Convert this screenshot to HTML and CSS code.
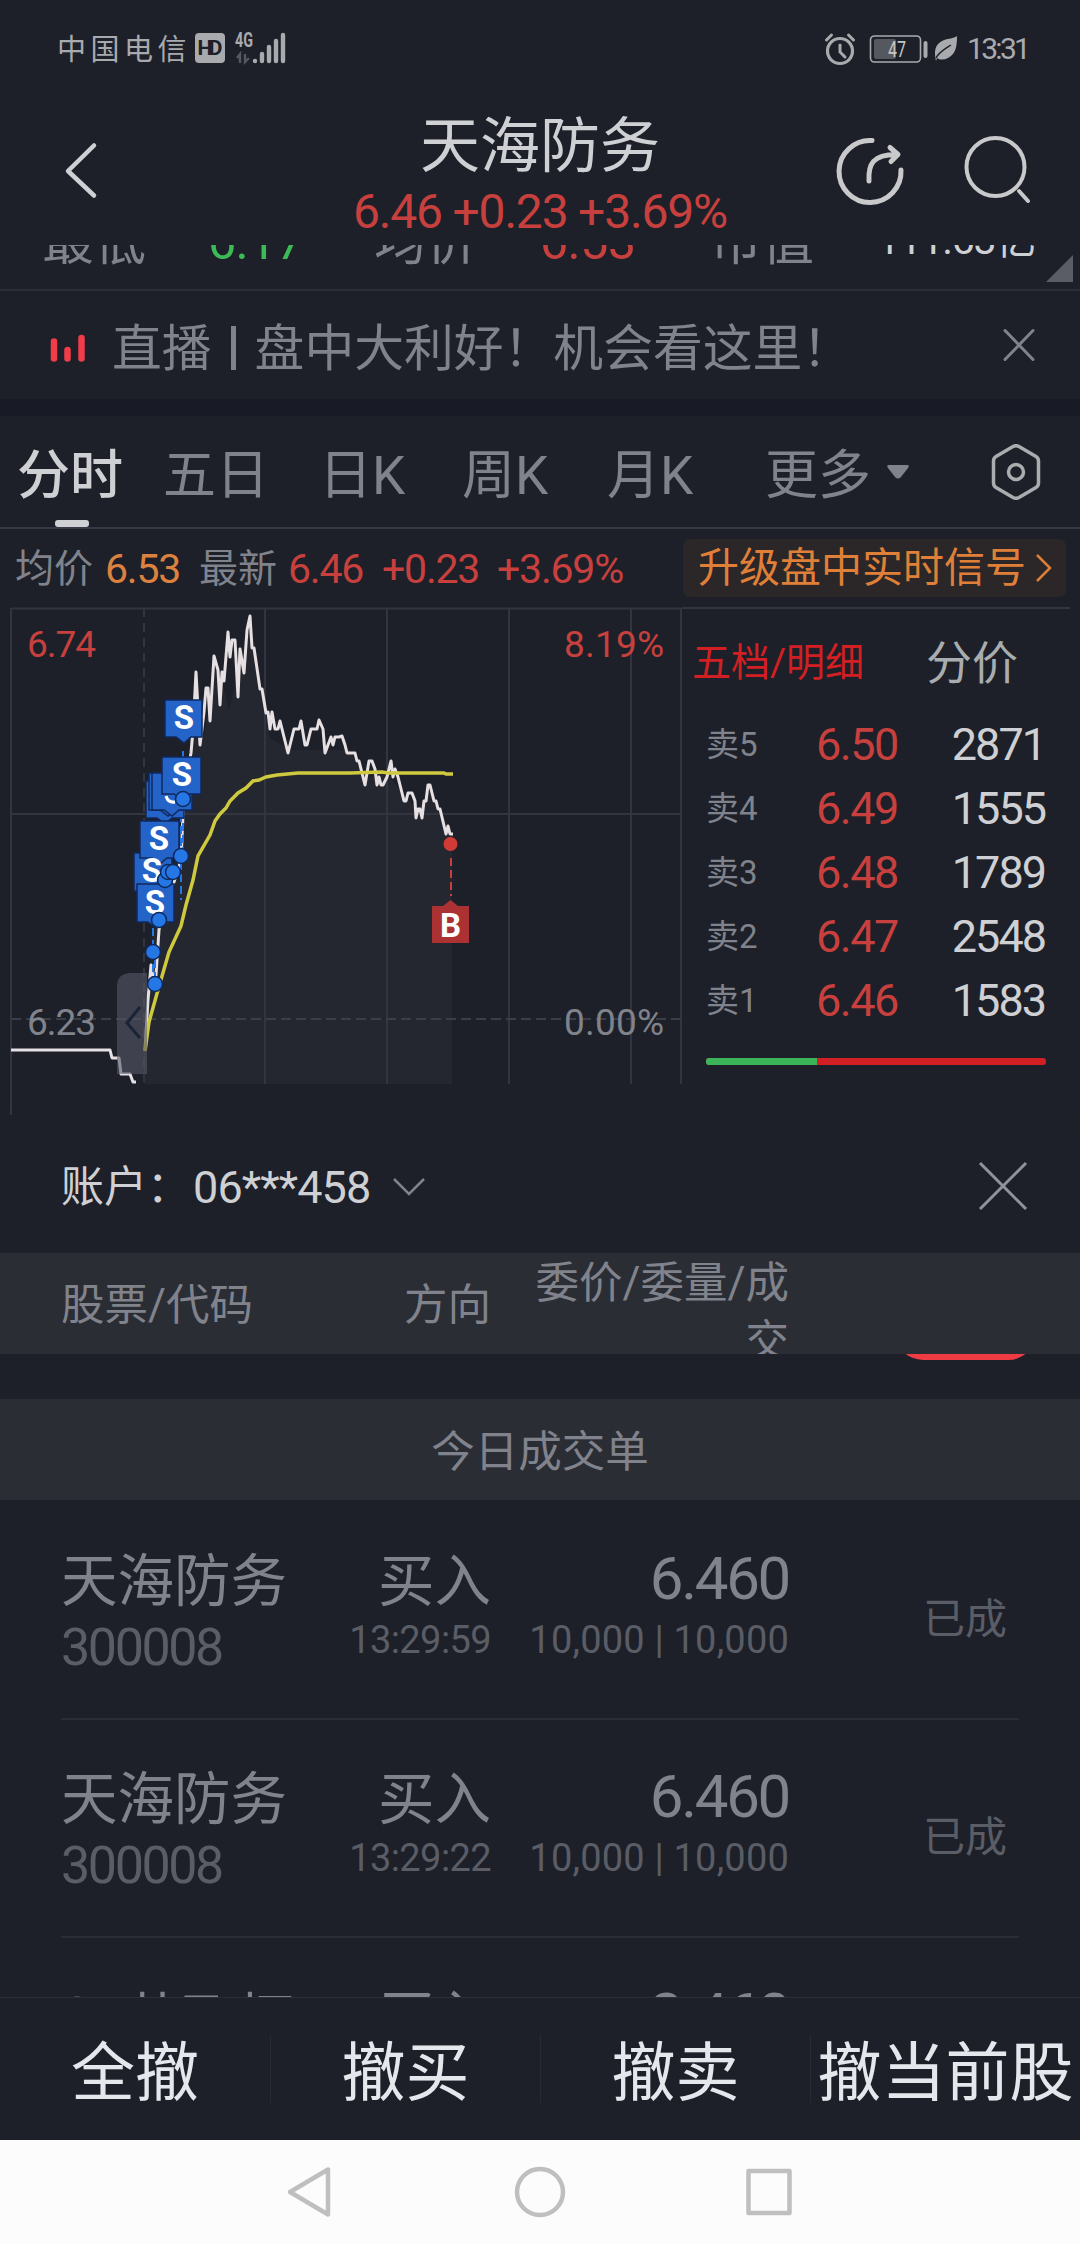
FILE: index.html
```html
<!DOCTYPE html>
<html lang="zh-CN">
<head>
<meta charset="utf-8">
<title>天海防务 300008</title>
<link rel="stylesheet" href="styles.css">
</head>
<body>
<div class="phone">
  <header class="status">
    <span class="carrier">中国电信</span>
    <svg class="signal" width="94" height="34" viewBox="194 32 94 34">
      <rect x="195" y="33" width="30" height="30" rx="4" fill="#a9aaae"/>
      <text x="210" y="55" class="hd" textLength="25">HD</text>
      <text x="244" y="47" class="g4" textLength="18" lengthAdjust="spacingAndGlyphs">4G</text>
      <path d="M240 63V54l-3 4M245 54v8l4-4" stroke="#555860" stroke-width="2.4" fill="none"/>
      <path d="M255 61v0M262 54v7M269 47v14M276 41v20M283 35v26" stroke="#a9aaae" stroke-width="4.4" stroke-linecap="round"/>
    </svg>
    <svg class="sysicons" width="136" height="36" viewBox="824 31 136 36">
      <g fill="none" stroke="#a9aaae" stroke-linecap="round">
        <circle cx="840" cy="51" r="12.5" stroke-width="3.2"/>
        <path d="M840 45v7l5 5" stroke-width="3"/>
        <path d="M826.500 40l5-5M853.500 40l-5-5" stroke-width="3"/>
        <rect x="870.500" y="36" width="50" height="26" rx="4" stroke-width="1.600"/>
        <path d="M925.500 43v13" stroke-width="4"/>
      </g>
      <rect x="874" y="39" width="22" height="20" rx="2" fill="#55585f"/>
      <text x="897" y="57" class="bat" textLength="18" lengthAdjust="spacingAndGlyphs">47</text>
      <path d="M957 36c0 10-1 18-9 22c-4 2-8 2-11 0l-1 3c-2-9-2-17 8-21c5-2 9-1 13-4z" fill="#a9aaae"/>
      <path d="M936 58c3-6 9-9 15-13" stroke="#1d2028" stroke-width="1.500" fill="none"/>
    </svg>
    <span class="clock">13:31</span>
  </header>

  <section class="header">
    <svg class="back" width="34" height="60" viewBox="64 140 34 60"><path d="M94 145.500L68 171l26 24.500" fill="none" stroke="#cfd0d4" stroke-width="4.500" stroke-linecap="round" stroke-linejoin="round"/></svg>
    <div class="heading">
      <h1>天海防务</h1>
      <p>6.46 +0.23 +3.69%</p>
    </div>
    <svg class="actions" width="200" height="76" viewBox="834 134 200 76">
      <g fill="none" stroke="#c9c9cc" stroke-linecap="round" stroke-linejoin="round">
        <path d="M872 140.500A31 31 0 1 0 901 170" stroke-width="5"/>
        <path d="M869 181C868 164 873 154.500 896 154.500M890 147.500l8 7l-7 7" stroke-width="5"/>
        <circle cx="995.500" cy="167" r="29" stroke-width="4"/>
        <path d="M1019 191l9 10" stroke-width="4"/>
      </g>
    </svg>
  </section>

  <section class="quote">
    <span>最低</span><b class="green">6.17</b><span>均价</span><b class="red">6.53</b><span>市值</span><b class="cap">111.63亿</b>
    <i class="corner"></i>
  </section>

  <section class="live">
    <svg width="36" height="30" viewBox="50 336 36 30"><path d="M54 344.500v17M67.500 353v8.500M81.500 341v20.500" stroke="#f23c48" stroke-width="6.500" stroke-linecap="round"/></svg>
    <span>直播</span><i class="bar"></i><span>盘中大利好！机会看这里！</span>
    <svg class="x" width="34" height="34" viewBox="0 0 34 34"><path d="M3 2.500l28 29M31 2.500L3 31.500" stroke="#80838c" stroke-width="3" stroke-linecap="round"/></svg>
  </section>

  <nav class="tabs">
    <span class="on">分时</span><span>五日</span><span>日K</span><span>周K</span><span>月K</span><span>更多</span>
    <svg class="tri" width="24" height="16" viewBox="0 0 24 16"><path d="M3 1h18q3 0 1 3l-7 9q-3 3-6 0l-7-9q-2-3 1-3z" fill="#80838c"/></svg>
    <svg class="hex" width="50" height="56" viewBox="-25 -28 50 56"><path d="M-3-25.500Q0-27 3-25.500L20-15.500Q22.500-14 22.500-11V11Q22.500 14 20 15.500L3 25.500Q0 27-3 25.500L-20 15.500Q-22.500 14-22.500 11V-11Q-22.500-14-20-15.500Z" fill="none" stroke="#a9adaf" stroke-width="3.500"/><circle r="7.500" fill="none" stroke="#a9adaf" stroke-width="3.500"/></svg>
  </nav>

  <section class="info">
    <span>均价</span><b class="orange">6.53</b><span>最新</span><b>6.46</b><b>+0.23</b><b>+3.69%</b>
    <div class="signalbtn">升级盘中实时信号<svg width="18" height="30" viewBox="0 0 18 30"><path d="M2 2l13 13L2 28" fill="none" stroke="#e08038" stroke-width="2.500"/></svg></div>
  </section>

  <section class="market">
    <svg class="chart" width="682" height="508" viewBox="0 607 682 508">
      <path d="M144 1084V1050L153 930L182 840L192 755L196 672L204 738L215 655L229 710L250 615L270 738L290 750L350 750L365 780L384 770L400 790L417 810L430 790L452 834V1084Z" fill="#24272f"/>
      <g stroke="#32353f" stroke-width="2" fill="none">
        <path d="M11 608.500H682M11 608V1115M681 608V1084M265 608V1084M387 608V1084M509 608V1084M631 608V1084M11 814H681"/>
        <path d="M144 608V1084" stroke-dasharray="9 6"/>
        <path d="M11 1019H681" stroke="#3a3e48" stroke-dasharray="10 5"/>
      </g>
      <g fill="none" stroke="#e6e0e3" stroke-width="3" stroke-linejoin="round">
        <path d="M11 1050H110L112 1058H119L121 1074H130L133 1082H136"/>
        <path d="M145 1050L148 1000L151 965L155 990L159 930L163 900L174 882L181 860L183 815L186 780L191 753L193 730L196 672L200 745L204 712L206 688H208L210 721L214 656L218 670L220 705L222 672L224 681L228 632L230 657L232 640H235L238 697L240 649L244 673L247 630L250 616L252 648H254L260 689H262L266 713L268 712L270 729L272 712L275 729H278L280 721L288 753L294 729H299L301 721L305 745H307L311 729H317L319 720L323 729L325 753L331 737L333 745L335 737L339 737L342 736L345 745L347 753H355L357 761H359L365 785L369 761H372L375 769L377 785L379 777L381 785H383L387 777L391 761L393 777L395 769L398 777L404 801H406L408 793H412L415 801L416 818L418 809H420L422 818L424 801H426L428 785H430L434 801H436L438 809H440L446 834L448 826L450 834H453"/>
      </g>
      <path d="M145 1051L149 1022L158 990L169 952L181 926L186 905L193 880L198 856L210 835L215 821L220 814L226 808L230 801L238 793L246 788L253 781L259 780L266 777L277 775L298 773H350L382 772L388 773H444L446 774H453" fill="none" stroke="#cfc93f" stroke-width="3.500"/>
      <g class="mark-s">
        <path d="M153 928V985M155 960V990M183 751V850M181 790V900M160 840V915" stroke="#2577e6" stroke-width="2" stroke-dasharray="8 4" fill="none"/>
        <g fill="#2463c8" stroke="#10295c" stroke-width="1.500">
          <path d="M134 853h38v38H134z"/>
          <path d="M146 781h38v37h-12l-7 6l-8-6h-11z"/>
          <path d="M149 773h38v37h-12l-7 6l-8-6h-11z"/>
          <path d="M152 773h40v37h-13l-7 6l-8-6h-12z"/>
          <path d="M140 821h39v37h-12l-7 6l-8-6h-12z"/>
          <path d="M165 700h37v37h-11l-7 6l-8-6h-11z"/>
          <path d="M162 757h39v37h-12l-7 6l-8-6h-12z"/>
        </g>
        <text x="152" y="882">S</text>
        <path d="M137 884h37v38h-11l-7 6l-8-6h-11z" fill="#2463c8" stroke="#10295c" stroke-width="1.500"/>
        <text x="184" y="729">S</text><text x="182" y="786">S</text><text x="159" y="850">S</text><text x="155" y="914">S</text>
        <path d="M166 796q2 7 9 6" stroke="#fff" stroke-width="3" fill="none"/>
        <g fill="#2577e6" stroke="#10295c" stroke-width="1.500">
          <circle cx="183" cy="799" r="7.500"/><circle cx="181" cy="856" r="7.500"/><circle cx="165" cy="880" r="7.500"/><circle cx="168" cy="872" r="7.500"/><circle cx="173" cy="872" r="7.500"/><circle cx="159" cy="920" r="7.500"/><circle cx="153" cy="952" r="7.500"/><circle cx="155" cy="984" r="7.500"/>
        </g>
      </g>
      <path d="M451 858V896" stroke="#c8403e" stroke-width="2" stroke-dasharray="8 4"/>
      <circle cx="450.500" cy="844" r="7" fill="#d23a36"/>
      <path d="M432 906h11l7.500-6l7.500 6h11v37H432z" fill="#ac3132"/>
      <text x="450.500" y="937" class="mark-b">B</text>
      <path d="M147 973V1074H117V987Q117 973 131 973z" fill="#565a68" opacity=".6"/>
      <path d="M140 1007l-13 16l13 15" fill="none" stroke="#1a2438" stroke-width="3"/>
      <g class="axis">
        <text x="27" y="657" fill="#c8403e" textLength="69">6.74</text>
        <text x="564" y="657" fill="#c8403e" textLength="100">8.19%</text>
        <text x="27" y="1035" fill="#80838c" textLength="69">6.23</text>
        <text x="564" y="1035" fill="#80838c" textLength="100">0.00%</text>
      </g>
    </svg>
    <div class="book">
      <div class="booktabs"><span class="on">五档/明细</span><span>分价</span></div>
      <div class="level"><span>卖5</span><b>6.50</b><em>2871</em></div>
      <div class="level"><span>卖4</span><b>6.49</b><em>1555</em></div>
      <div class="level"><span>卖3</span><b>6.48</b><em>1789</em></div>
      <div class="level"><span>卖2</span><b>6.47</b><em>2548</em></div>
      <div class="level"><span>卖1</span><b>6.46</b><em>1583</em></div>
      <div class="ratio"><i></i></div>
    </div>
  </section>

  <section class="sheet">
    <div class="account">
      <span>账户：</span><b>06***458</b>
      <svg width="34" height="20" viewBox="0 0 34 20"><path d="M2 2l15 15L32 2" fill="none" stroke="#80838c" stroke-width="2.500"/></svg>
      <svg class="close" width="50" height="50" viewBox="0 0 50 50"><path d="M2 2l46 46M48 2L2 48" stroke="#90939a" stroke-width="3"/></svg>
    </div>
    <div class="thead"><span>股票/代码</span><span>方向</span><span class="multi">委价/委量/成交</span></div>
    <div class="gap"><i></i></div>
    <div class="thead2">今日成交单</div>
    <div class="list">
      <div class="order">
        <div><b>天海防务</b><span class="code">300008</span></div>
        <div><b>买入</b><span>13:29:59</span></div>
        <div><b class="num">6.460</b><span class="vol">10,000 | 10,000</span></div>
        <em>已成</em>
      </div>
      <div class="order">
        <div><b>天海防务</b><span class="code">300008</span></div>
        <div><b>买入</b><span>13:29:22</span></div>
        <div><b class="num">6.460</b><span class="vol">10,000 | 10,000</span></div>
        <em>已成</em>
      </div>
      <div class="order">
        <div class="partial"><b><i>ST</i>英飞拓</b></div>
        <div><b>买入</b></div>
        <div><b class="num">3.460</b></div>
      </div>
    </div>
  </section>

  <footer class="cancel"><span>全撤</span><span>撤买</span><span>撤卖</span><span>撤当前股</span></footer>
  <nav class="sysnav">
    <svg width="520" height="56" viewBox="280 2164 520 56" fill="none" stroke="#bfbfbf" stroke-width="4.500" stroke-linejoin="round">
      <path d="M290 2192L328 2169.500V2214.500Z"/><circle cx="540" cy="2192" r="23"/><rect x="748.500" y="2171" width="41" height="42"/>
    </svg>
  </nav>
</div>
</body>
</html>
```
FILE: styles.css
```css
* { box-sizing: border-box; margin: 0; padding: 0; }
body { background: #1d2028; font-family: Roboto, "Noto Sans CJK SC", sans-serif; color: #80838c; }
b, em, i, h1 { font-weight: 400; font-style: normal; }
svg { display: block; flex: none; }
span, b, em { white-space: nowrap; }
.phone { width: 1080px; height: 2244px; overflow: hidden; }

.status { height: 100px; display: flex; align-items: flex-start; color: #a9aaae; }
.carrier { margin-left: 57px; width: 137px; font-size: 29px; letter-spacing: 4.500px; line-height: 40px; margin-top: 30px; }
.signal { margin-top: 32px; }
.hd { font: 700 21px Roboto, sans-serif; fill: #1d2028; text-anchor: middle; }
.g4 { font: 700 20px Roboto, sans-serif; fill: #a9aaae; text-anchor: middle; }
.sysicons { margin: 31px 0 0 536px; }
.bat { font: 400 22px Roboto, sans-serif; fill: #c4c5c8; text-anchor: middle; }
.clock { margin: 29px 0 0 7px; font-size: 30px; line-height: 40px; letter-spacing: -2.700px; }

.header { height: 145px; display: flex; align-items: flex-start; }
.back { margin: 40px 0 0 64px; }
.heading { width: 400px; margin-left: 242px; text-align: center; }
.heading h1 { font-size: 60px; line-height: 80px; margin-top: 7px; color: #cfd0d4; }
.heading p { font-size: 48px; line-height: 50px; letter-spacing: -1.2px; color: #c8403e; white-space: nowrap; }
.actions { margin: 34px 0 0 94px; }

.quote { position: relative; height: 46px; overflow: hidden; border-bottom: 2px solid #2b2e37; display: grid; grid-template-columns: 166px 166px 166px 170px 150px 175px; padding-left: 42px; }
.quote > span { line-height: 60px; margin-top: -32px; font-size: 52px; }
.quote > b { line-height: 60px; margin-top: -33px; font-size: 50px; letter-spacing: -.500px; }
.quote .green { color: #3cba58; }
.quote .red { color: #c8403e; }
.quote .cap { font-size: 41px; color: #cfd0d4; text-align: right; margin-top: -35px; letter-spacing: -1.300px; }
.corner { position: absolute; right: 7px; top: 10px; width: 27px; height: 27px; background: #5a5d66; clip-path: polygon(100% 0, 100% 100%, 0 100%); }

.live { height: 108px; display: flex; align-items: center; padding: 5px 44px 0 50px; font-size: 49.800px; }
.live span { line-height: 80px; padding-top: 2px; }
.live span:first-of-type { margin-left: 26px; }
.bar { width: 5px; height: 44px; background: #80838c; margin: 0 19px; }
.live .x { margin: 0 0 5px auto; }

.tabs { height: 130px; border-top: 17px solid #181b25; border-bottom: 2px solid #363a47; display: grid; grid-template-columns: 146px 156px 143px 145px 158px 121px 105px 50px; padding-left: 17px; font-size: 53px; }
.tabs span { line-height: 120px; height: 111px; }
.tabs .on { color: #cfd0d4; position: relative; font-weight: 500; }
.tabs .on::after { content: ""; position: absolute; left: 38px; bottom: 0; width: 34px; height: 7px; border-radius: 3px; background: #cfd0d4; }
.tri { margin-top: 48px; }
.hex { margin-top: 28px; }

.info { height: 78px; display: grid; grid-template-columns: 90px 94px 89px 94px 115px 186px 383px; padding: 0 0 0 15px; line-height: 80px; font-size: 39px; }
.info b { font-size: 41px; color: #c8403e; letter-spacing: -1.200px; }
.info .orange { color: #dc8240; }
.signalbtn { height: 58px; margin-top: 10px; padding-left: 15px; border-radius: 7px; background: #2b2628; color: #e08038; font-size: 41px; line-height: 60px; display: flex; align-items: center; gap: 9px; }

.market { height: 477px; display: flex; align-items: flex-start; }
.chart { margin-bottom: -31px; }
.mark-s text, .mark-b { font: 700 33px Roboto, sans-serif; fill: #fff; text-anchor: middle; }
.axis { font: 400 37px Roboto, sans-serif; }
.book { width: 388px; border-top: 2px solid #32353f; padding-left: 10px; }
.booktabs { height: 103px; display: flex; line-height: 108px; font-size: 46px; color: #a9adaf; }
.booktabs .on { width: 234px; font-size: 39px; color: #d21f23; }
.level { height: 64px; display: grid; grid-template-columns: 110px 100px 129px; line-height: 65px; padding-left: 14px; font-size: 45px; }
.level span { font-size: 33px; }
.level b { color: #c8403e; letter-spacing: -1.500px; }
.level em { color: #cfd0d4; text-align: right; letter-spacing: -2px; }
.ratio { margin: 26px 0 0 14px; width: 340px; height: 7px; border-radius: 3px; overflow: hidden; background: #d21f23; }
.ratio i { display: block; width: 111px; height: 7px; background: #3cb55a; }

.sheet { height: 913px; background: #1d2028; border-radius: 64px 64px 0 0; }
.account { height: 169px; padding: 37px 52px 0 61px; display: flex; align-items: center; color: #cfd0d4; font-size: 43px; }
.account span { line-height: 60px; }
.account b { font-size: 45px; margin: 0 22px 0 3px; letter-spacing: -.9px; }
.account .close { margin: -3px 0 0 auto; }
.thead { height: 101px; overflow: hidden; background: #2b2d35; display: grid; grid-template-columns: 200px 230px 298px; padding-left: 61px; font-size: 43.500px; line-height: 106px; }
.thead span:nth-child(n+2) { text-align: right; }
.thead .multi { line-height: 58px; padding: 2px 0 0 30px; white-space: normal; word-break: break-all; }
.gap { height: 45px; padding-left: 895px; overflow: hidden; }
.gap i { display: block; width: 141px; height: 60px; margin-top: -54px; border-radius: 28px; background: #ee3b44; }
.thead2 { height: 101px; background: #2b2d35; text-align: center; font-size: 43.500px; line-height: 107px; }
.list { height: 497px; overflow: hidden; padding: 2px 61px 0; }
.order { height: 218px; border-bottom: 2px solid #2a2d35; display: grid; grid-template-columns: 200px 230px 298px 218px; padding-top: 43px; color: #5a5d66; }
.order div { display: flex; flex-direction: column; }
.order div:nth-child(n+2) { align-items: flex-end; }
.order b { font-size: 56.500px; line-height: 74px; height: 70px; color: #80838c; }
.order .num { font-size: 60px; line-height: 68px; letter-spacing: -2.300px; }
.order span { font-size: 38px; line-height: 50px; letter-spacing: -.6px; }
.order .vol { letter-spacing: .2px; }
.order .code { font-size: 52px; line-height: 66px; letter-spacing: -2.400px; }
.order em { font-size: 42px; text-align: right; line-height: 150px; }
.order .partial { padding-top: 3px; }
.partial i { font-size: 54px; line-height: 1; vertical-align: 5px; letter-spacing: -.5px; }
.cancel { height: 143px; border-top: 1px solid #2b2e37; display: grid; grid-template-columns: repeat(4, 270px); align-items: center; text-align: center; font-size: 64px; color: #e4e7ec; }
.cancel span { height: 68px; line-height: 78px; }
.cancel span + span { border-left: 1px solid #272a33; }
.sysnav { height: 104px; background: #fcfcfc; padding: 24px 0 0 280px; }
```
